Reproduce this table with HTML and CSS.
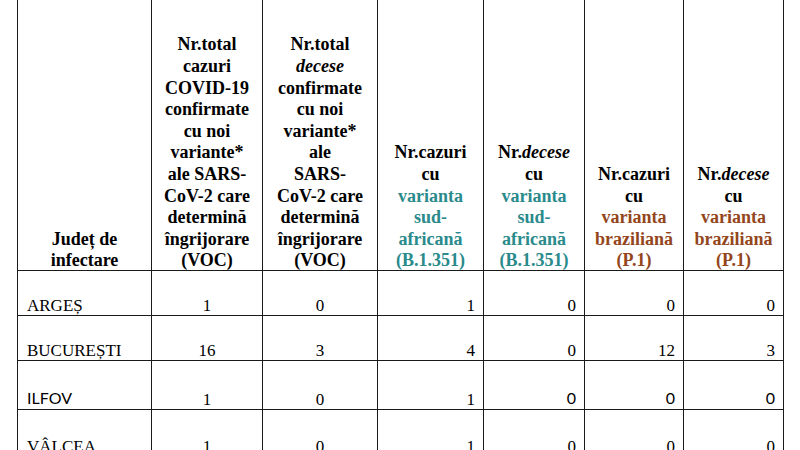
FILE: index.html
```html
<!DOCTYPE html>
<html lang="ro">
<head>
<meta charset="utf-8">
<title>Variante SARS-CoV-2</title>
<link rel="stylesheet" href="styles.css">
</head>
<body>
<div class="page">
<table class="voc">
  <colgroup>
    <col class="c-judet">
    <col class="c-tot1">
    <col class="c-tot2">
    <col class="c-sa1">
    <col class="c-sa2">
    <col class="c-br1">
    <col class="c-br2">
  </colgroup>
  <thead>
    <tr class="head">
      <th><div class="hl">Județ de<br>infectare</div></th>
      <th><div class="hl">Nr.total<br>cazuri<br>COVID-19<br>confirmate<br>cu noi<br>variante*<br>ale SARS-<br>CoV-2 care<br>determină<br>îngrijorare<br>(VOC)</div></th>
      <th><div class="hl">Nr.total<br><em>decese</em><br>confirmate<br>cu noi<br>variante*<br>ale<br>SARS-<br>CoV-2 care<br>determină<br>îngrijorare<br>(VOC)</div></th>
      <th><div class="hl">Nr.cazuri<br>cu<br><span class="teal">varianta<br>sud-<br>africană<br>(B.1.351)</span></div></th>
      <th><div class="hl">Nr.<em>decese</em><br>cu<br><span class="teal">varianta<br>sud-<br>africană<br>(B.1.351)</span></div></th>
      <th><div class="hl">Nr.cazuri<br>cu<br><span class="brown">varianta<br>braziliană<br>(P.1)</span></div></th>
      <th><div class="hl">Nr.<em>decese</em><br>cu<br><span class="brown">varianta<br>braziliană<br>(P.1)</span></div></th>
    </tr>
  </thead>
  <tbody>
    <tr class="r1">
      <td class="name">ARGEȘ</td>
      <td class="mid">1</td><td class="mid">0</td>
      <td>1</td><td>0</td><td>0</td><td>0</td>
    </tr>
    <tr class="r2">
      <td class="name">BUCUREȘTI</td>
      <td class="mid">16</td><td class="mid">3</td>
      <td>4</td><td>0</td><td>12</td><td>3</td>
    </tr>
    <tr class="r3">
      <td class="name sans">ILFOV</td>
      <td class="mid">1</td><td class="mid">0</td>
      <td>1</td><td class="sans">0</td><td class="sans">0</td><td class="sans">0</td>
    </tr>
    <tr class="r4">
      <td class="name">VÂLCEA</td>
      <td class="mid">1</td><td class="mid">0</td>
      <td>1</td><td>0</td><td>0</td><td>0</td>
    </tr>
  </tbody>
</table>
</div>
</body>
</html>
```

FILE: styles.css
```css
html, body {
  margin: 0;
  padding: 0;
  background: #ffffff;
}

.page {
  padding-left: 17px;
  width: 800px;
  height: 450px;
  overflow: hidden;
  box-sizing: border-box;
}

.voc {
  border-collapse: collapse;
  table-layout: fixed;
  width: 766px;
  font-family: "Liberation Serif", "Times New Roman", serif;
  color: #000;
}

.c-judet { width: 134px; }
.c-tot1 { width: 111px; }
.c-tot2 { width: 115px; }
.c-sa1 { width: 106px; }
.c-sa2 { width: 101px; }
.c-br1 { width: 99px; }
.c-br2 { width: 100px; }

.voc th,
.voc td {
  border: 1px solid #1a1a1a;
  padding: 0;
}

.head th {
  border-top: none;
  height: 270px;
  vertical-align: bottom;
  text-align: center;
  font-size: 18px;
  line-height: 21.6px;
  font-weight: bold;
  padding: 0 2px;
}

.hl {
  margin-bottom: -2px;
}

.head th em {
  font-style: italic;
}

.teal { color: #2a8a8c; }
.brown { color: #93461c; }

.voc td {
  font-size: 17px;
  line-height: 19px;
  vertical-align: bottom;
  text-align: right;
  padding: 0 8px 0;
}

.voc td.mid { text-align: center; padding: 0; }
.voc td.name { text-align: left; padding-left: 9px; }

.voc td.sans {
  font-family: Lato, "Liberation Sans", sans-serif;
  font-size: 16px;
  padding-bottom: 2px;
}

.r1 td { height: 44px; }
.r2 td { height: 44px; }
.r3 td { height: 46px; }
.r4 td { height: 46px; }
```
